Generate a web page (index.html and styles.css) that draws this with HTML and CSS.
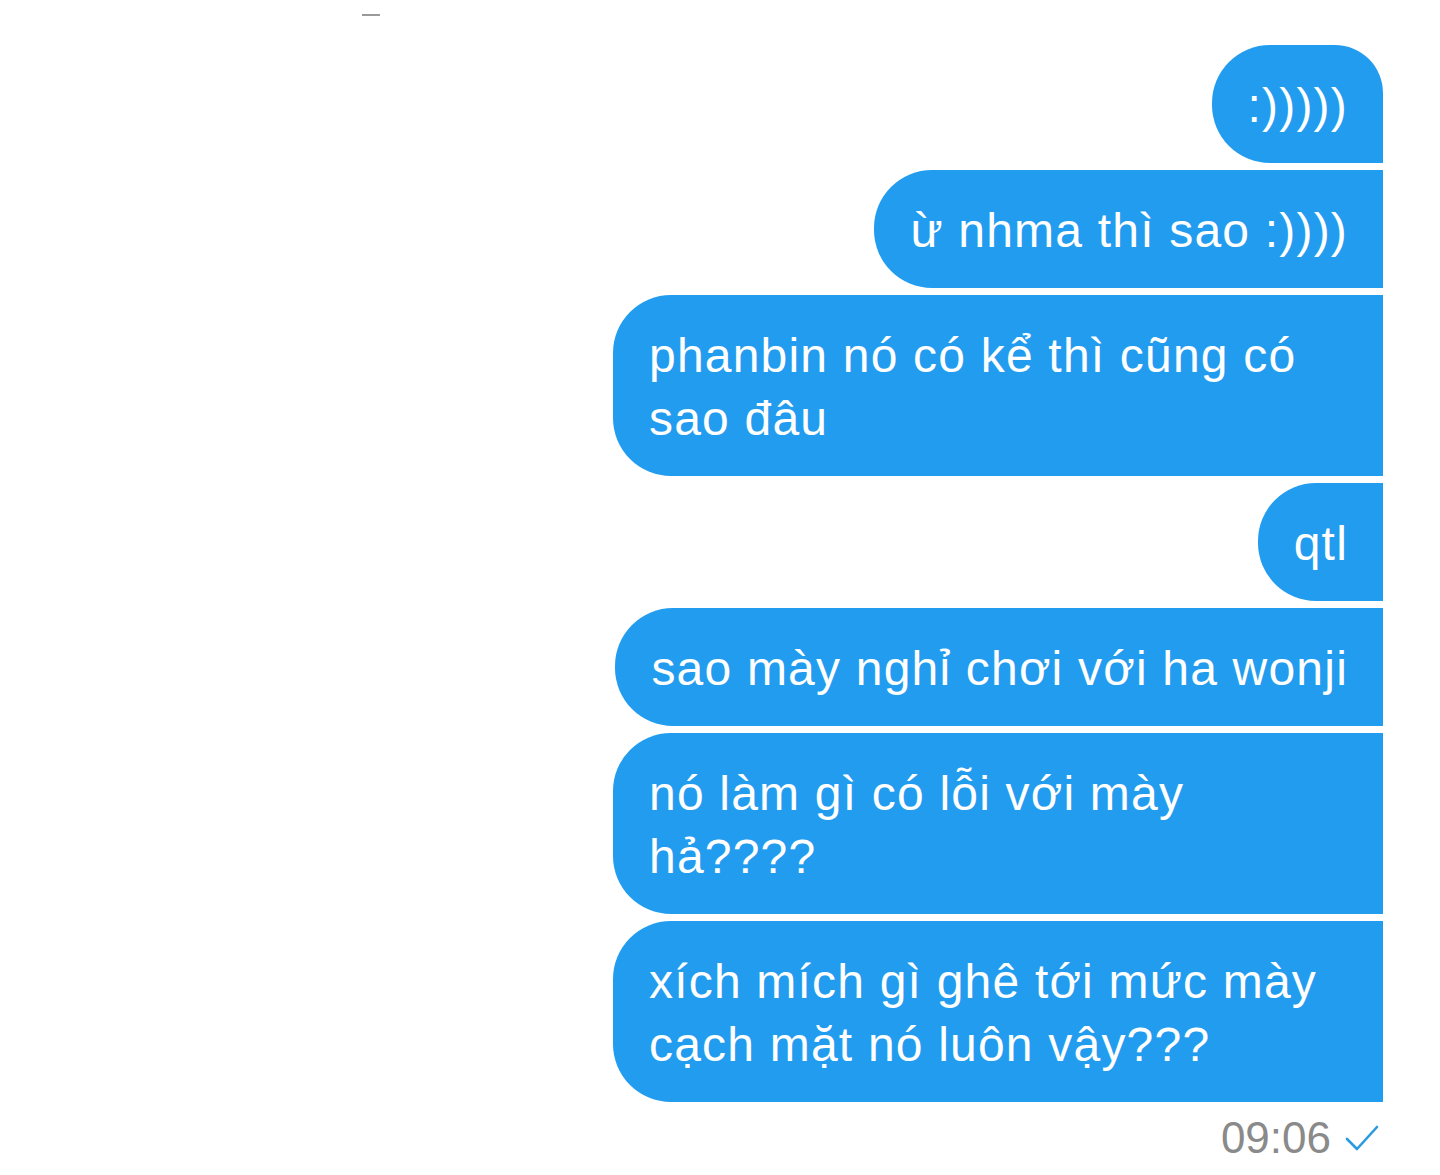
FILE: index.html
```html
<!DOCTYPE html>
<html lang="vi">
<head>
<meta charset="utf-8">
<title>Chat</title>
<link rel="stylesheet" href="styles.css">
</head>
<body>
<div class="page">
  <div class="topbar"><span class="dash"></span></div>
  <div class="thread">
    <div class="bubble first">:)))))</div>
    <div class="bubble">ừ nhma thì sao :))))</div>
    <div class="bubble">phanbin nó có kể thì cũng có sao đâu</div>
    <div class="bubble">qtl</div>
    <div class="bubble">sao mày nghỉ chơi với ha wonji</div>
    <div class="bubble">nó làm gì có lỗi với mày hả????</div>
    <div class="bubble">xích mích gì ghê tới mức mày cạch mặt nó luôn vậy???</div>
    <div class="meta">
      <span class="time">09:06</span>
      <svg class="check" width="34" height="28" viewBox="0 0 34 28" aria-hidden="true">
        <path d="M2 15 L12 25 L32 3" fill="none" stroke="#2A9BE0" stroke-width="2.6" stroke-linecap="round" stroke-linejoin="round"/>
      </svg>
    </div>
  </div>
</div>
</body>
</html>
```

FILE: styles.css
```css
html, body {
  margin: 0;
  padding: 0;
  background: #ffffff;
}

body {
  font-family: "Liberation Sans", Arial, sans-serif;
}

.page {
  width: 1440px;
  height: 1175px;
  overflow: hidden;
  position: relative;
}

.topbar {
  height: 45px;
  padding-left: 362px;
  box-sizing: border-box;
  padding-top: 14px;
}

.dash {
  display: block;
  width: 18px;
  height: 2px;
  background: #9a9a9a;
}

.thread {
  display: flex;
  flex-direction: column;
  align-items: flex-end;
  gap: 7px;
  padding-right: 57px;
}

.bubble {
  box-sizing: border-box;
  max-width: 770px;
  background: #229CEF;
  color: #ffffff;
  font-size: 48px;
  letter-spacing: 1.2px;
  line-height: 63px;
  padding: 29px 35px 26px 36px;
  border-radius: 58px 0 0 58px;
}

.bubble.first {
  border-radius: 58px 48px 0 58px;
}

.meta {
  display: flex;
  align-items: center;
  gap: 14px;
  margin-top: 4px;
  padding-right: 4px;
}

.time {
  color: #8a8a8a;
  font-size: 44px;
  line-height: 50px;
}

.check {
  display: block;
  margin-top: 0;
}
```
